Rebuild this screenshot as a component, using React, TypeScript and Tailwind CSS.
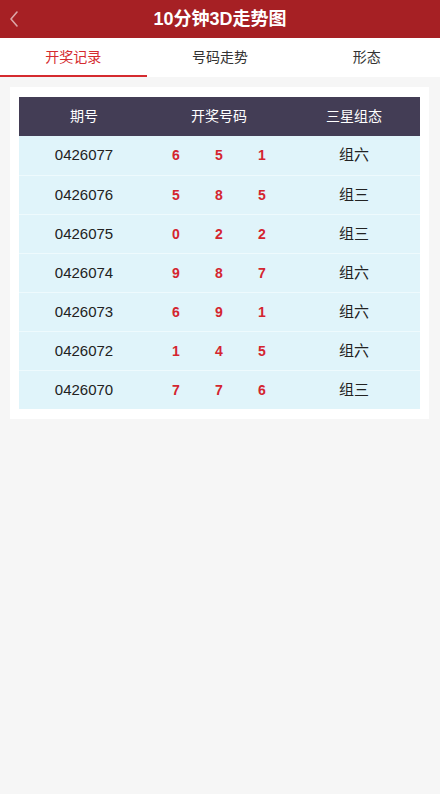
import { useState } from "react";

const rows = [
  { issue: "0426077", nums: [6, 5, 1], form: "组六" },
  { issue: "0426076", nums: [5, 8, 5], form: "组三" },
  { issue: "0426075", nums: [0, 2, 2], form: "组三" },
  { issue: "0426074", nums: [9, 8, 7], form: "组六" },
  { issue: "0426073", nums: [6, 9, 1], form: "组六" },
  { issue: "0426072", nums: [1, 4, 5], form: "组六" },
  { issue: "0426070", nums: [7, 7, 6], form: "组三" },
];

const tabs = ["开奖记录", "号码走势", "形态"];

export default function App() {
  const [tab, setTab] = useState(0);

  return (
    <div className="min-h-[794px] bg-[#f6f6f6] font-['Liberation_Sans','Noto_Sans_CJK_SC',sans-serif]">
      {/* header */}
      <div className="relative flex h-[38px] items-center justify-center bg-[#a62024]">
        <button type="button" className="absolute left-[8px] top-[9px] text-white/60" aria-label="back">
          <svg className="h-[20px] w-[12px]" viewBox="0 0 12 20" fill="none" stroke="currentColor" strokeWidth={1.6}>
            <path d="M9 3L3 10l6 7" strokeLinecap="round" strokeLinejoin="round" />
          </svg>
        </button>
        <h1 className="text-[18px] font-bold text-white">10分钟3D走势图</h1>
      </div>

      {/* tabs */}
      <div className="flex h-[39px] bg-white">
        {tabs.map((t, i) => (
          <button
            key={t}
            type="button"
            onClick={() => setTab(i)}
            className={`flex flex-1 items-center justify-center border-b-2 pt-[2px] text-[14px] ${
              tab === i ? "border-[#d52b2f] text-[#d52b2f]" : "border-transparent text-[#333]"
            }`}
          >
            {t}
          </button>
        ))}
      </div>

      {/* card */}
      <div className="ml-[10px] mr-[11px] mt-[10px] bg-white px-[9px] py-[10px]">
        <div className="grid grid-cols-[130px_140px_130px] bg-[#433d55] text-[14px] text-white">
          <div className="flex h-[39px] items-center justify-center">期号</div>
          <div className="flex h-[39px] items-center justify-center">开奖号码</div>
          <div className="flex h-[39px] items-center justify-center">三星组态</div>
        </div>
        {rows.map((r, idx) => (
          <div
            key={r.issue}
            className={`grid h-[39px] grid-cols-[130px_140px_130px] items-center bg-[#e0f4fa] text-[15px] text-[#222] ${
              idx > 0 ? "border-t border-[#eefafd]" : ""
            }`}
          >
            <div className="text-center">{r.issue}</div>
            <div className="flex justify-center gap-[35px] text-[14px] font-bold text-[#d4252f]">
              {r.nums.map((n, j) => (
                <span key={j} className="w-[8px] text-center">
                  {n}
                </span>
              ))}
            </div>
            <div className="text-center">{r.form}</div>
          </div>
        ))}
      </div>
    </div>
  );
}
